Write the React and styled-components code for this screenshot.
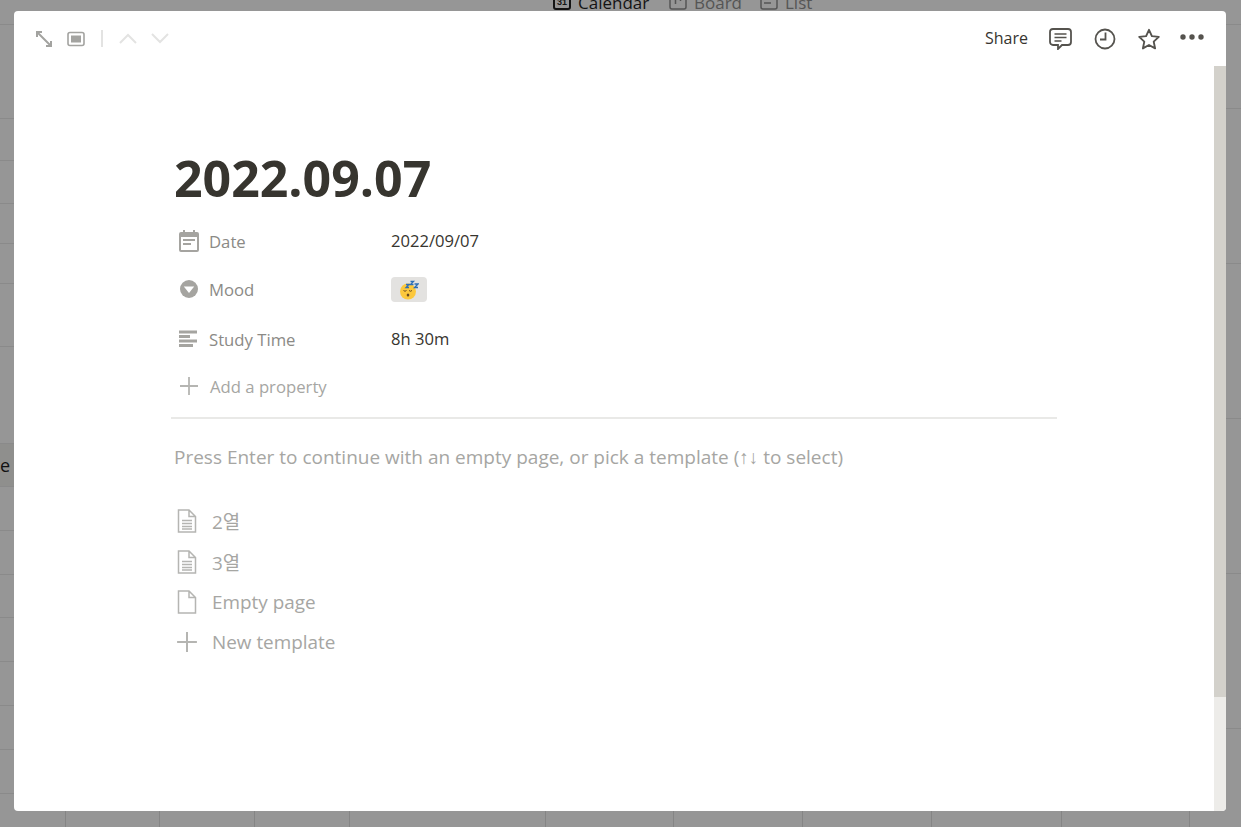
import React from 'react';
import styled, { createGlobalStyle } from 'styled-components';

const GlobalStyle = createGlobalStyle`
  html, body { margin: 0; padding: 0; }
  body { font-family: "Open Sans", "Noto Sans CJK KR", sans-serif; background: #969696; }
`

const Backdrop = styled.div`
  position: relative;
  display: flex;
  width: 1241px;
  height: 827px;
  overflow: hidden;
  background: #969696;
`
const Rail = styled.div`
  display: flex;
  flex-direction: column;
  flex: none;
  width: ${p => p.$width}px;
`
const RailRow = styled.div`
  flex: none;
  box-sizing: border-box;
  height: ${p => p.$height}px;
  padding-right: 4px;
  border-bottom: 1px solid #8a8a8a;
  background: ${p => p.$tint ? '#8f8f8d' : 'transparent'};
  font-size: 18px;
  line-height: ${p => p.$height}px;
  color: #111;
  text-align: right;
  overflow: hidden;
`
const Behind = styled.div`
  flex: 1;
  display: flex;
  flex-direction: column;
  justify-content: space-between;
`
const Tabs = styled.div`
  display: flex;
  align-items: center;
  height: 11px;
  padding-left: 539px;
  overflow: hidden;
`
const Tab = styled.div`
  display: flex;
  align-items: center;
  flex: none;
  gap: 7px;
  width: ${p => p.$width}px;
  margin-top: -6px;
  font-size: 17px;
  color: ${p => p.$active ? '#141414' : '#555'};
  svg { flex: none; margin-top: -4px; }
`
const BottomCells = styled.div`
  display: flex;
  height: 16px;
`
const BottomCell = styled.div`
  flex: none;
  box-sizing: border-box;
  width: ${p => p.$width}px;
  border-right: 1px solid #858585;
`

const Modal = styled.div`
  position: absolute;
  top: 11px;
  left: 14px;
  width: 1212px;
  height: 800px;
  display: flex;
  flex-direction: column;
  background: #fff;
  border-radius: 4px;
  overflow: hidden;
`
const Toolbar = styled.div`
  flex: none;
  display: flex;
  align-items: center;
  justify-content: space-between;
  height: 55px;
  padding: 0 22px 0 20px;
`
const ToolGroup = styled.div`
  display: flex;
  align-items: center;
`
const IconSlot = styled.div`
  display: flex;
  align-items: center;
  justify-content: center;
  flex: none;
  width: ${p => p.$width}px;
  margin-right: ${p => p.$gap || 0}px;
`
const Divider = styled.div`
  width: 2px;
  height: 17px;
  margin: 0 16px 0 16px;
  background: #e3e3e2;
`
const ShareLabel = styled.span`
  padding-bottom: 2px;
  font-size: 16px;
  color: #37352f;
  margin-right: 21px;
`
const Content = styled.div`
  flex: 1;
  display: flex;
  min-height: 0;
`
const Main = styled.div`
  flex: 1;
  padding: 82px 0 0 157px;
`
const Page = styled.div`
  width: 886px;
`
const Title = styled.h1`
  margin: 0;
  padding-left: 3px;
  font-size: 50px;
  line-height: 60px;
  font-weight: 700;
  color: #37352f;
`
const Props = styled.div`
  display: flex;
  flex-direction: column;
  padding-top: 9px;
`
const PropRow = styled.div`
  display: flex;
  align-items: center;
  height: ${p => p.$height}px;
`
const PropName = styled.div`
  display: flex;
  align-items: center;
  flex: none;
  width: 220px;
  padding-left: ${p => p.$faint ? 8 : 7}px;
  box-sizing: border-box;
  font-size: 16.7px;
  color: ${p => p.$faint ? '#a6a6a3' : '#8b8a86'};
  svg { flex: none; margin-right: ${p => p.$faint ? 11 : 9}px; }
`
const PropValue = styled.div`
  padding-bottom: 2px;
  font-size: 16.6px;
  color: #37352f;
`
const MoodTag = styled.div`
  display: flex;
  align-items: center;
  justify-content: center;
  width: 36px;
  height: 25px;
  margin-top: 1px;
  border-radius: 4px;
  background: #e3e2e0;
`
const Rule = styled.div`
  height: 2px;
  margin-top: 10px;
  background: #e9e9e7;
`
const Hint = styled.p`
  margin: 25px 0 30px 3px;
  font-size: 19px;
  line-height: 26px;
  color: #a6a6a3;
`
const ArrowGlyphs = styled.span`
  font-family: "Liberation Sans", sans-serif;
  font-size: 19px;
`
const TemplateRow = styled.div`
  display: flex;
  align-items: center;
  height: 40.4px;
  padding-left: 3px;
  font-size: 18.9px;
  color: #a6a6a3;
`
const TemplateIcon = styled.div`
  display: flex;
  justify-content: center;
  flex: none;
  width: 26px;
  margin-right: 12px;
`
const ScrollTrack = styled.div`
  flex: none;
  width: 12px;
  background: #edece9;
`
const ScrollThumb = styled.div`
  height: 631px;
  background: #d3d1cb;
`
const TabIconText = styled.text`
  font-family: "Liberation Sans", sans-serif;
  font-size: 9px;
  font-weight: 700;
  fill: #141414;
  stroke: none;
`

const ExpandIcon = () => (
  <svg width="20" height="20" viewBox="0 0 20 20" fill="none" stroke="#a3a3a0" strokeWidth="2">
    <path d="M3 3l14 14M3 8V3h5M17 12v5h-5" />
  </svg>
)
const PeekIcon = () => (
  <svg width="18" height="16" viewBox="0 0 18 16">
    <rect x="1" y="1.500" width="16" height="13" rx="2" fill="none" stroke="#a3a3a0" strokeWidth="1.600" />
    <rect x="4" y="4.500" width="10" height="7" fill="#a3a3a0" />
  </svg>
)
const Chevron = ({ up }) => (
  <svg width="18" height="11" viewBox="0 0 18 11" fill="none" stroke="#e3e3e2" strokeWidth="2">
    <path d={up ? 'M1 10l8-8 8 8' : 'M1 1l8 8 8-8'} />
  </svg>
)
const CommentIcon = () => (
  <svg width="23" height="22" viewBox="0 0 23 22" fill="none" stroke="#55534e">
    <path strokeWidth="1.800" d="M4 1h15a3 3 0 0 1 3 3v10a3 3 0 0 1-3 3h-6l-4 4v-4H4a3 3 0 0 1-3-3V4a3 3 0 0 1 3-3z" />
    <path strokeWidth="1.600" d="M5.500 6h12M5.500 9.500h12M5.500 13h7" />
  </svg>
)
const ClockIcon = () => (
  <svg width="22" height="22" viewBox="0 0 22 22" fill="none" stroke="#55534e" strokeWidth="1.800">
    <circle cx="11" cy="11" r="9.500" />
    <path d="M11.500 4.500v7H6" />
  </svg>
)
const StarIcon = () => (
  <svg width="24" height="22" viewBox="0 0 23 22" fill="none" stroke="#55534e" strokeWidth="1.900" strokeLinejoin="round">
    <path d="M11.500 1.800l2.900 6.300 6.900.8-5.100 4.700 1.400 6.800-6.100-3.400-6.100 3.400 1.400-6.800L1.700 8.900l6.900-.8z" />
  </svg>
)
const DotsIcon = () => (
  <svg width="24" height="9" viewBox="0 0 24 9" fill="#55534e">
    <circle cx="3" cy="3" r="2.700" />
    <circle cx="12" cy="3" r="2.700" />
    <circle cx="21" cy="3" r="2.700" />
  </svg>
)
const DateIcon = () => (
  <svg width="22" height="22" viewBox="0 0 22 22">
    <path fill="#a5a4a0" fillRule="evenodd" d="M3 2h2V0h2v2h8V0h2v2h2a2 2 0 0 1 2 2v16a2 2 0 0 1-2 2H3a2 2 0 0 1-2-2V4a2 2 0 0 1 2-2zm0 5v13h16V7H3z" />
    <path fill="#a5a4a0" d="M5 9h12v2H5zM5 13h8v2H5z" />
  </svg>
)
const SelectIcon = () => (
  <svg width="22" height="20" viewBox="0 0 22 20">
    <circle cx="11" cy="10" r="9" fill="#a5a4a0" />
    <path fill="#fff" d="M5.800 7.500h10.400L11 14z" />
  </svg>
)
const TextIcon = () => (
  <svg width="22" height="18" viewBox="0 0 22 18" fill="#a5a4a0">
    <rect x="1" y="0.500" width="18" height="3" />
    <rect x="1" y="5" width="11" height="3" />
    <rect x="1" y="9.500" width="18" height="3" />
    <rect x="1" y="14" width="14" height="3" />
  </svg>
)
const PlusIcon = ({ size, color }) => (
  <svg width={size} height={size} viewBox="0 0 20 20" stroke={color} strokeWidth="1.800">
    <path d="M10 1v18M1 10h18" />
  </svg>
)
const PageIcon = ({ lines }) => (
  <svg width="20" height="24" viewBox="0 0 20 24" fill="none" stroke="#b5b5b2" strokeWidth="1.500">
    <path d="M1.500 1h10.500l6.500 6.500V23h-17zM12 1v6.500h6.500" />
    {lines && <path d="M5 11.500h10M5 14.500h10M5 17.500h10M5 20h10" />}
  </svg>
)
const SleepEmoji = () => (
  <svg width="20" height="20" viewBox="0 0 20 20">
    <circle cx="9" cy="11.500" r="8" fill="#fcc83c" />
    <path d="M4.500 10.500q1.500 1.500 3 0M10 10.500q1.500 1.500 3 0" fill="none" stroke="#6a4a20" strokeWidth="1" />
    <ellipse cx="9" cy="15" rx="1.300" ry="1.500" fill="#6a4a20" />
    <path d="M7 4.500h3l-3 3h3M11.500 1.500h3l-3 3h3M15.500 4h3.500l-3.500 3.500h3.500" fill="none" stroke="#2f6fb5" strokeWidth="1.300" />
  </svg>
)
const CalendarTabIcon = () => (
  <svg width="18" height="18" viewBox="0 0 18 18" fill="none" stroke="#141414" strokeWidth="2">
    <rect x="1" y="1" width="16" height="16" rx="2" />
    <TabIconText x="4" y="13">31</TabIconText>
  </svg>
)
const BoardTabIcon = () => (
  <svg width="18" height="18" viewBox="0 0 18 18" fill="none" stroke="#555" strokeWidth="1.500">
    <rect x="1" y="1" width="16" height="16" rx="2" />
    <path d="M6.500 4v8M11.500 4v5" />
  </svg>
)
const ListTabIcon = () => (
  <svg width="18" height="18" viewBox="0 0 18 18" fill="none" stroke="#555" strokeWidth="1.500">
    <rect x="1" y="1" width="16" height="16" rx="2" />
    <path d="M4 11h7" />
  </svg>
)

const leftRows = [25, 94, 42, 43, 40, 40, 63, 97, 43, 44, 44, 43, 44, 44, 44, 44]
const rightRows = [25, 84, 155, 155, 155, 155]
const cellWidths = [52, 94, 95, 95, 196, 128, 129, 129, 130, 128]

const App = () => {
  return (
    <Backdrop>
      <GlobalStyle />
      <Rail $width={14}>
        {leftRows.map((height, i) => (
          <RailRow key={i} $height={height} $tint={i === 8}>{i === 8 ? 'e' : ''}</RailRow>
        ))}
      </Rail>
      <Behind>
        <Tabs>
          <Tab $width={116} $active><CalendarTabIcon />Calendar</Tab>
          <Tab $width={91}><BoardTabIcon />Board</Tab>
          <Tab $width={60}><ListTabIcon />List</Tab>
        </Tabs>
        <BottomCells>
          {cellWidths.map((width, i) => <BottomCell key={i} $width={width} />)}
        </BottomCells>
      </Behind>
      <Rail $width={15}>
        {rightRows.map((height, i) => <RailRow key={i} $height={height} />)}
      </Rail>

      <Modal>
        <Toolbar>
          <ToolGroup>
            <IconSlot $width={20} $gap={13}><ExpandIcon /></IconSlot>
            <IconSlot $width={18}><PeekIcon /></IconSlot>
            <Divider />
            <IconSlot $width={18} $gap={14}><Chevron up /></IconSlot>
            <IconSlot $width={18}><Chevron /></IconSlot>
          </ToolGroup>
          <ToolGroup>
            <ShareLabel>Share</ShareLabel>
            <IconSlot $width={23} $gap={22}><CommentIcon /></IconSlot>
            <IconSlot $width={22} $gap={21}><ClockIcon /></IconSlot>
            <IconSlot $width={24} $gap={19}><StarIcon /></IconSlot>
            <IconSlot $width={24}><DotsIcon /></IconSlot>
          </ToolGroup>
        </Toolbar>
        <Content>
          <Main>
            <Page>
              <Title>2022.09.07</Title>
              <Props>
                <PropRow $height={48}>
                  <PropName><DateIcon />Date</PropName>
                  <PropValue>2022/09/07</PropValue>
                </PropRow>
                <PropRow $height={48}>
                  <PropName><SelectIcon />Mood</PropName>
                  <MoodTag><SleepEmoji /></MoodTag>
                </PropRow>
                <PropRow $height={52}>
                  <PropName><TextIcon />Study Time</PropName>
                  <PropValue>8h 30m</PropValue>
                </PropRow>
                <PropRow $height={42}>
                  <PropName $faint><PlusIcon size={20} color="#b5b5b2" />Add a property</PropName>
                </PropRow>
              </Props>
              <Rule />
              <Hint>Press Enter to continue with an empty page, or pick a template (<ArrowGlyphs>↑↓</ArrowGlyphs> to select)</Hint>
              <TemplateRow><TemplateIcon><PageIcon lines /></TemplateIcon>2열</TemplateRow>
              <TemplateRow><TemplateIcon><PageIcon lines /></TemplateIcon>3열</TemplateRow>
              <TemplateRow><TemplateIcon><PageIcon /></TemplateIcon>Empty page</TemplateRow>
              <TemplateRow><TemplateIcon><PlusIcon size={22} color="#b5b5b2" /></TemplateIcon>New template</TemplateRow>
            </Page>
          </Main>
          <ScrollTrack><ScrollThumb /></ScrollTrack>
        </Content>
      </Modal>
    </Backdrop>
  );
}

export default App;
